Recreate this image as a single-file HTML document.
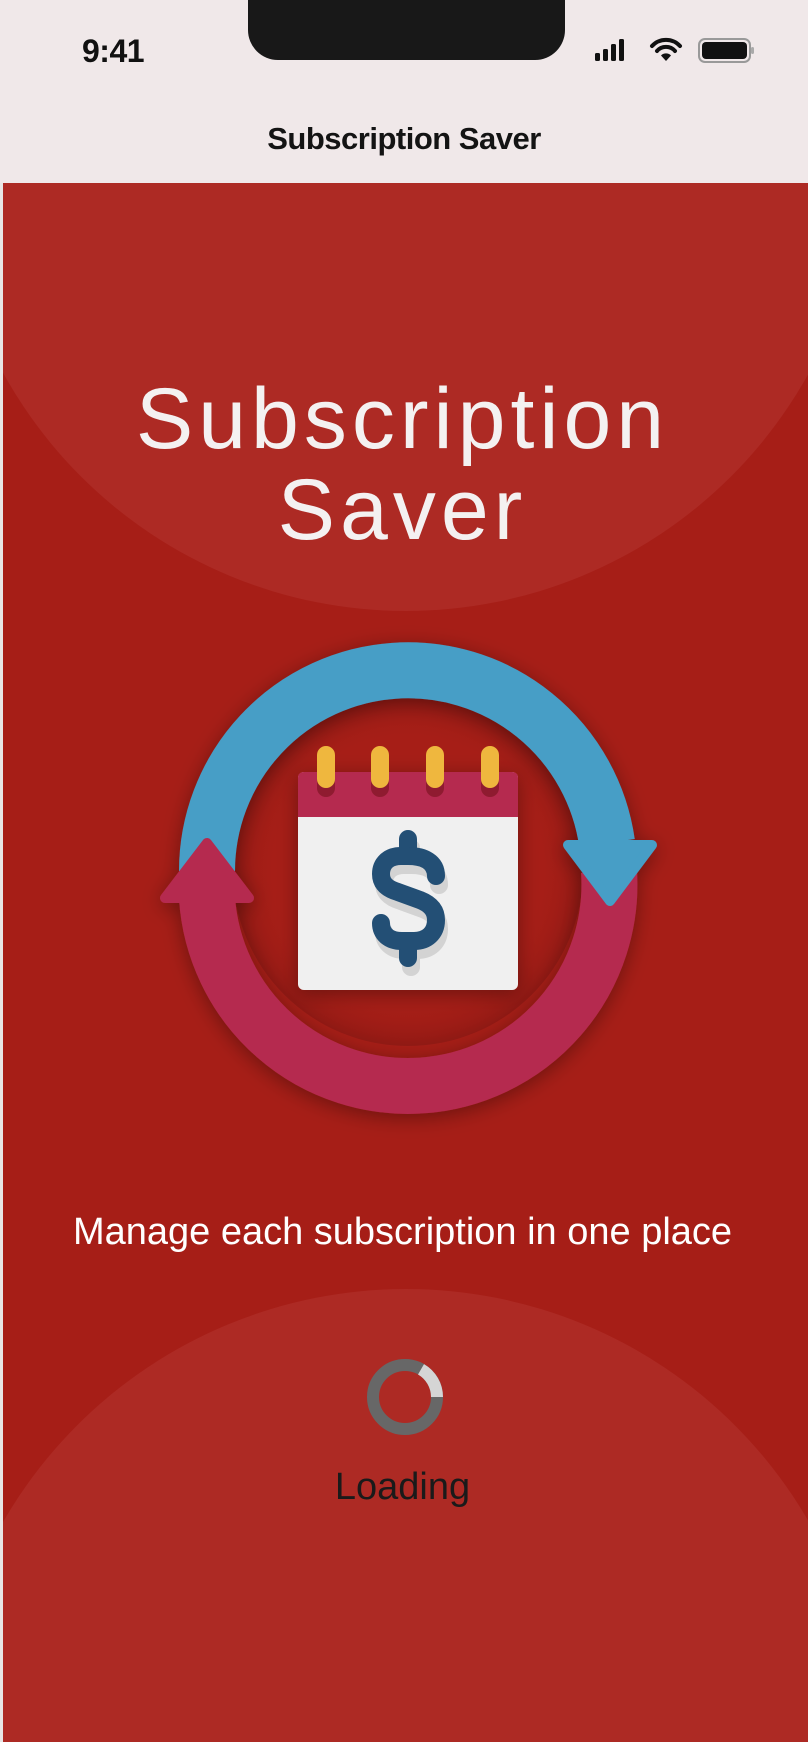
<!DOCTYPE html>
<html><head><meta charset="utf-8"><style>
*{margin:0;padding:0;box-sizing:border-box}
html,body{overflow:hidden}
body{width:808px;height:1742px;background:#e8e6e6;font-family:"Liberation Sans",sans-serif;position:relative}
.hdr{position:absolute;left:0;top:0;width:808px;height:183px;background:#f0e8e9}
.main{position:absolute;left:3px;top:183px;width:805px;height:1559px;background:#a61e17;overflow:hidden}
.c1,.c2{position:absolute;border-radius:50%;background:#ad2a24}
.c1{width:920px;height:920px;left:-57px;top:-492px}
.c2{width:930px;height:930px;left:-62px;top:1106px}
.notch{position:absolute;left:248px;top:0;width:317px;height:60px;background:#181818;border-radius:0 0 30px 30px}
.time{position:absolute;left:82px;top:33px;font-size:32px;font-weight:700;color:#111;letter-spacing:-0.5px}
.ttl{position:absolute;left:0;width:808px;top:121px;text-align:center;font-size:31px;font-weight:700;color:#141414;letter-spacing:-0.5px}
.big{position:absolute;left:0;width:805px;top:374px;text-align:center;color:#f4f1f1;font-size:86px;line-height:91px;letter-spacing:5px}
.tag{position:absolute;left:0;width:805px;top:1211px;text-align:center;color:#fff;font-size:38px}
.load{position:absolute;left:0;width:805px;top:1466px;text-align:center;color:#1a1a1a;font-size:38px}
</style></head><body>
<div class="hdr"></div>
<div class="notch"></div>
<div class="time">9:41</div>
<svg style="position:absolute;left:590px;top:36px" width="170" height="30" viewBox="0 0 170 30">
<rect x="5" y="17" width="5" height="8" rx="1.5" fill="#111"/>
<rect x="13" y="13" width="5" height="12" rx="1.5" fill="#111"/>
<rect x="21" y="8" width="5" height="17" rx="1.5" fill="#111"/>
<rect x="29" y="3" width="5" height="22" rx="1.5" fill="#111"/>
<path d="M76 25 L71 19.5 A7 7 0 0 1 81 19.5 Z" fill="#111"/>
<path d="M67 15 A12 12 0 0 1 85 15" stroke="#111" stroke-width="4" fill="none" stroke-linecap="round"/>
<path d="M62 10 A19 19 0 0 1 90 10" stroke="#111" stroke-width="4" fill="none" stroke-linecap="round"/>
<rect x="109" y="3" width="51" height="23" rx="6" fill="none" stroke="#999" stroke-width="2"/>
<rect x="112" y="6" width="45" height="17" rx="4" fill="#111"/>
<rect x="161" y="11" width="3" height="7" rx="1.5" fill="#aaa"/>
</svg>
<div class="ttl">Subscription Saver</div>
<div class="main"><div class="c1"></div><div class="c2"></div></div>
<div class="big">Subscription<br>Saver</div>
<svg style="position:absolute;left:0;top:0" width="808" height="1200" viewBox="0 0 808 1200">
<defs>
<filter id="sh" x="-30%" y="-30%" width="160%" height="160%"><feGaussianBlur in="SourceAlpha" stdDeviation="10"/><feOffset dy="4"/><feComponentTransfer><feFuncA type="linear" slope="0.35"/></feComponentTransfer><feMerge><feMergeNode/><feMergeNode in="SourceGraphic"/></feMerge></filter>
<radialGradient id="ig" cx="408" cy="871" r="173" gradientUnits="userSpaceOnUse"><stop offset="0.75" stop-color="#a61e17" stop-opacity="0"/><stop offset="1" stop-color="#7a1410" stop-opacity="0.45"/></radialGradient>
</defs>
<circle cx="408" cy="871" r="175" fill="url(#ig)"/>
<g filter="url(#sh)">
<path d="M207 871 A201 201 0 0 1 607 843" stroke="#469ec6" stroke-width="56" fill="none"/>
<path d="M609 871 A201 201 0 0 1 207 898" stroke="#b52a4f" stroke-width="56" fill="none"/>
<path d="M568 845 L652 845 L610 901 Z" fill="#469ec6" stroke="#469ec6" stroke-width="10" stroke-linejoin="round"/>
<path d="M165 898 L249 898 L207 843 Z" fill="#b52a4f" stroke="#b52a4f" stroke-width="10" stroke-linejoin="round"/>
</g>
<g filter="url(#sh)">
<rect x="298" y="772" width="220" height="218" rx="6" fill="#f0f0f0"/>
<path d="M298 817 L298 778 Q298 772 304 772 L512 772 Q518 772 518 778 L518 817 Z" fill="#b52a4f"/>
</g>
<g stroke-linecap="round" stroke-width="18" fill="none">
<path d="M326 763 V788 M380 763 V788 M435 763 V788 M490 763 V788" stroke="#8f1b30"/>
<path d="M326 755 V779 M380 755 V779 M435 755 V779 M490 755 V779" stroke="#efb73e"/>
<g transform="translate(3,9)" stroke="#d3d3d3">
<path d="M408 839 V856 M408 941 V958"/>
<path d="M436 876 C436 862 424 856 408 856 L401 856 C388 856 381 864 381 874 C381 884 388 889 398 892 L420 900 C430 904 436 910 436 920 C436 933 427 941 414 941 L402 941 C388 941 381 933 381 923"/>
</g>
<g stroke="#234f75">
<path d="M408 839 V856 M408 941 V958"/>
<path d="M436 876 C436 862 424 856 408 856 L401 856 C388 856 381 864 381 874 C381 884 388 889 398 892 L420 900 C430 904 436 910 436 920 C436 933 427 941 414 941 L402 941 C388 941 381 933 381 923"/>
</g>
</g>
</svg>
<div class="tag">Manage each subscription in one place</div>
<svg style="position:absolute;left:365px;top:1357px" width="80" height="80" viewBox="0 0 80 80">
<circle cx="40" cy="40" r="32" stroke="#676767" stroke-width="12" fill="none"/>
<path d="M56 12.3 A32 32 0 0 1 72 40" stroke="#d5d5d5" stroke-width="12" fill="none"/>
</svg>
<div class="load">Loading</div>
</body></html>
